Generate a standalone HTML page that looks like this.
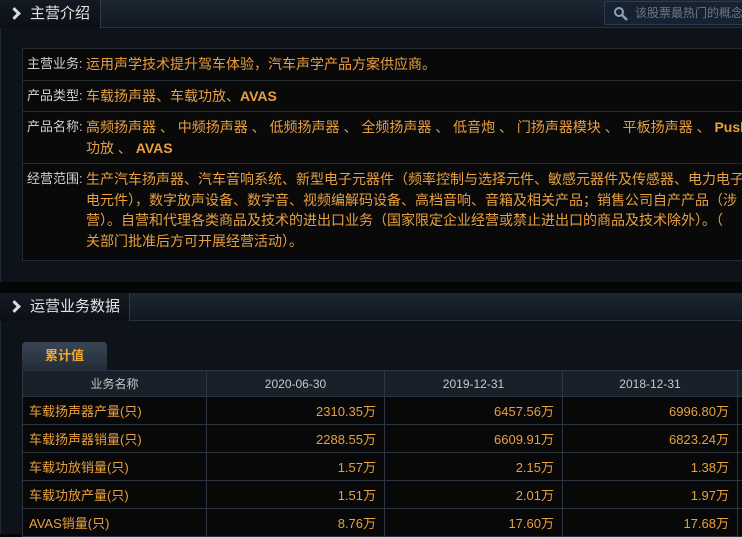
<!DOCTYPE html>
<html><head><meta charset="utf-8"><style>
*{margin:0;padding:0;box-sizing:border-box}
body{width:742px;height:534px;overflow:hidden;background:#050607;font-family:"Liberation Sans","Noto Sans CJK SC",sans-serif;font-size:12px;color:#c8c8c8;position:relative}
.hdr{position:absolute;left:0;width:742px;height:28px;background:linear-gradient(#1c2632,#111820);border-bottom:1px solid #263240}
.tab{position:absolute;left:0;top:0;height:28px;background:linear-gradient(#141a22,#0c1016);border-right:1px solid #2e3a48;color:#e4e4e4;font-size:15px;line-height:28px;padding-left:30px}
.tab:before{content:"";position:absolute;left:10px;top:9px;width:6px;height:6px;border-right:3px solid #ddd;border-top:3px solid #ddd;transform:rotate(45deg)}
.panel{position:absolute;left:0;width:742px;background:#0e131a;border-left:1px solid #1f2a36}
.info{position:absolute;left:22px;top:48px;width:730px;border:1px solid #222a33;background:#090909}
.row{border-bottom:1px solid #232b35;display:flex;line-height:20.5px;padding:5px 0 5px}
.row:last-child{border-bottom:none}
.lab{width:63px;padding-left:4px;color:#d0d0d0;flex:none;font-size:13px}
.val{color:#e8a040;white-space:nowrap;font-size:14px}
.val b{font-weight:bold}
table{position:absolute;left:22px;top:370px;border-collapse:collapse;width:730px}
td,th{border:1px solid #2c3642;height:28px;font-weight:normal}
th{background:#18202a;color:#c8c8c8;height:26px}
td{background:#080808;color:#e8a040;text-align:right;padding-right:8px;font-size:13px}
td.n{text-align:left;padding-left:6px;font-size:13px}
.search{position:absolute;left:604px;top:1px;width:140px;height:24px;border:1px solid #2c3c50;background:#16222f;border-radius:2px;color:#6a7888;font-size:12px;line-height:22px;padding-left:30px}
</style></head><body>
<div class="panel" style="top:0;height:282px"></div>
<div class="hdr" style="top:0"><div class="tab" style="width:101px">主营介绍</div>
<div class="search"><svg style="position:absolute;left:8px;top:4px" width="16" height="16"><circle cx="6" cy="6" r="4" fill="none" stroke="#8aa0b4" stroke-width="2"/><path d="M9 9l5 5" stroke="#8aa0b4" stroke-width="2.5"/></svg>该股票最热门的概念</div></div>
<div class="info">
<div class="row"><div class="lab">主营业务:</div><div class="val">运用声学技术提升驾车体验，汽车声学产品方案供应商。</div></div>
<div class="row"><div class="lab">产品类型:</div><div class="val">车载扬声器、车载功放、<b>AVAS</b></div></div>
<div class="row"><div class="lab">产品名称:</div><div class="val">高频扬声器 、 中频扬声器 、 低频扬声器 、 全频扬声器 、 低音炮 、 门扬声器模块 、 平板扬声器 、 <b>Push</b><br>功放 、 <b>AVAS</b></div></div>
<div class="row" style="padding-bottom:9px"><div class="lab">经营范围:</div><div class="val">生产汽车扬声器、汽车音响系统、新型电子元器件（频率控制与选择元件、敏感元器件及传感器、电力电子<br>电元件），数字放声设备、数字音、视频编解码设备、高档音响、音箱及相关产品；销售公司自产产品（涉<br>营）。自营和代理各类商品及技术的进出口业务（国家限定企业经营或禁止进出口的商品及技术除外）。（<br>关部门批准后方可开展经营活动）。</div></div>
</div>
<div class="panel" style="top:293px;height:241px"></div>
<div class="hdr" style="top:293px"><div class="tab" style="width:130px">运营业务数据</div></div>
<div style="position:absolute;left:22px;top:342px;width:85px;height:28px;background:linear-gradient(#3a4654,#222c38);border-radius:4px 4px 0 0;color:#f0a830;font-weight:bold;text-align:center;line-height:28px;font-size:13px">累计值</div>
<table>
<tr><th style="width:184px">业务名称</th><th style="width:178px">2020-06-30</th><th style="width:178px">2019-12-31</th><th style="width:175px">2018-12-31</th><th></th></tr>
<tr><td class="n">车载扬声器产量(只)</td><td>2310.35万</td><td>6457.56万</td><td>6996.80万</td><td></td></tr>
<tr><td class="n">车载扬声器销量(只)</td><td>2288.55万</td><td>6609.91万</td><td>6823.24万</td><td></td></tr>
<tr><td class="n">车载功放销量(只)</td><td>1.57万</td><td>2.15万</td><td>1.38万</td><td></td></tr>
<tr><td class="n">车载功放产量(只)</td><td>1.51万</td><td>2.01万</td><td>1.97万</td><td></td></tr>
<tr><td class="n">AVAS销量(只)</td><td>8.76万</td><td>17.60万</td><td>17.68万</td><td></td></tr>
</table>
</body></html>
